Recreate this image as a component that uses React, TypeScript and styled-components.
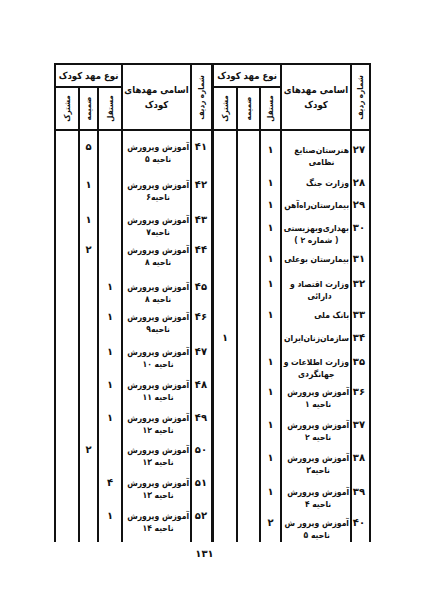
import React from "react";
import styled, { createGlobalStyle } from "styled-components";

type Row = {
  n: string;
  name: string[];
  top: number;
  mostaghel?: string;
  zamime?: string;
  moshtarak?: string;
};

const INK = "#111";
const BODY_START = 131;
const BODY_END = 542;

const rightRows: Row[] = [
  { n: "۲۷", name: ["هنرستان‌صنایع", "نظامی"], top: 150, mostaghel: "۱" },
  { n: "۲۸", name: ["وزارت جنگ"], top: 183, mostaghel: "۱" },
  { n: "۲۹", name: ["بیمارستان‌راه‌آهن"], top: 205, mostaghel: "۱" },
  { n: "۳۰", name: ["بهداری‌وبهزیستی", "( شماره ۲ )"], top: 228, mostaghel: "۱" },
  { n: "۳۱", name: ["بیمارستان بوعلی"], top: 259, mostaghel: "۱" },
  { n: "۳۲", name: ["وزارت اقتصاد و", "دارائی"], top: 284, mostaghel: "۱" },
  { n: "۳۳", name: ["بانک ملی"], top: 315, mostaghel: "۱" },
  { n: "۳۴", name: ["سازمان‌زنان‌ایران"], top: 338, moshtarak: "۱" },
  { n: "۳۵", name: ["وزارت اطلاعات و", "جهانگردی"], top: 362, mostaghel: "۱" },
  { n: "۳۶", name: ["آموزش وپرورش", "ناحیه ۱"], top: 392, mostaghel: "۱" },
  { n: "۳۷", name: ["آموزش وپرورش", "ناحیه ۲"], top: 425, mostaghel: "۱" },
  { n: "۳۸", name: ["آموزش وپرورش", "ناحیه۳"], top: 458, mostaghel: "۱" },
  { n: "۳۹", name: ["آموزش وپرورش", "ناحیه ۴"], top: 492, mostaghel: "۱" },
  { n: "۴۰", name: ["آموزش وپرور ش", "ناحیه ۵"], top: 523, mostaghel: "۲" },
];

const leftRows: Row[] = [
  { n: "۴۱", name: ["آموزش وپرورش", "ناحیه ۵"], top: 147, zamime: "۵" },
  { n: "۴۲", name: ["آموزش وپرورش", "ناحیه۶"], top: 185, zamime: "۱" },
  { n: "۴۳", name: ["آموزش وپرورش", "ناحیه۷"], top: 220, zamime: "۱" },
  { n: "۴۴", name: ["آموزش وپرورش", "ناحیه ۸"], top: 250, zamime: "۲" },
  { n: "۴۵", name: ["آموزش وپرورش", "ناحیه ۸"], top: 287, mostaghel: "۱" },
  { n: "۴۶", name: ["آموزش وپرورش", "ناحیه۹"], top: 317, mostaghel: "۱" },
  { n: "۴۷", name: ["آموزش وپرورش", "ناحیه ۱۰"], top: 352, mostaghel: "۱" },
  { n: "۴۸", name: ["آموزش وپرورش", "ناحیه ۱۱"], top: 385, mostaghel: "۱" },
  { n: "۴۹", name: ["آموزش وپرورش", "ناحیه ۱۲"], top: 418, mostaghel: "۱" },
  { n: "۵۰", name: ["آموزش وپرورش", "ناحیه ۱۳"], top: 450, zamime: "۲" },
  { n: "۵۱", name: ["آموزش وپرورش", "ناحیه ۱۳"], top: 483, mostaghel: "۴" },
  { n: "۵۲", name: ["آموزش وپرورش", "ناحیه ۱۴"], top: 516, mostaghel: "۱" },
];

const GlobalStyle = createGlobalStyle`
  html, body {
    margin: 0;
    padding: 0;
    background: #fff;
  }
  body {
    font-family: "DejaVu Sans Condensed", "DejaVu Sans", sans-serif;
    color: ${INK};
  }
`;

const Page = styled.div`
  width: 424px;
  height: 599px;
  box-sizing: border-box;
  padding: 63px 0 0 54px;
  background: #fff;
`;

const Table = styled.div`
  display: flex;
  width: 317px;
`;

const Half = styled.div<{ $cols: string; $rows: string; $left: number; $right: number }>`
  display: grid;
  direction: rtl;
  grid-template-columns: ${(p) => p.$cols};
  grid-template-rows: ${(p) => p.$rows};
  border-top: 2px solid ${INK};
  border-left: ${(p) => p.$left}px solid ${INK};
  border-right: ${(p) => p.$right}px solid ${INK};
`;

const HeadCell = styled.div<{ $edge?: boolean; $tall?: boolean }>`
  box-sizing: border-box;
  grid-row: ${(p) => (p.$tall ? "span 2" : "auto")};
  border-left: ${(p) => (p.$edge ? 0 : 2)}px solid ${INK};
  border-bottom: 2px solid ${INK};
  display: flex;
  align-items: center;
  justify-content: center;
  font-size: 9.5px;
  font-weight: bold;
  line-height: 15px;
  text-align: center;
  white-space: nowrap;
`;

const GroupCell = styled(HeadCell)`
  grid-column: span 3;
`;

const Vertical = styled.span`
  display: inline-block;
  transform: rotate(-90deg);
  white-space: nowrap;
  font-size: 8px;
`;

const Cell = styled.div<{ $edge?: boolean; $pad: number; $kind: "num" | "name" | "val" }>`
  box-sizing: border-box;
  border-left: ${(p) => (p.$edge ? 0 : 2)}px solid ${INK};
  padding-top: ${(p) => p.$pad}px;
  padding-right: ${(p) => (p.$kind === "num" ? 4 : p.$kind === "name" ? 1 : 0)}px;
  text-align: ${(p) => (p.$kind === "val" ? "center" : "right")};
  font-family: ${(p) => (p.$kind === "name" ? "inherit" : `"DejaVu Sans", sans-serif`)};
  font-size: ${(p) => (p.$kind === "name" ? 8.5 : 10)}px;
  font-weight: bold;
  line-height: 12px;
  white-space: nowrap;
`;

const NameBlock = styled.span`
  display: inline-block;
  text-align: center;
  letter-spacing: -0.2px;

  span {
    display: block;
  }
  span:first-child {
    text-align: right;
  }
`;

const Footer = styled.div`
  width: 317px;
  box-sizing: border-box;
  padding: 5px 16px 0 0;
  text-align: center;
  font-family: "DejaVu Sans", sans-serif;
  font-size: 10px;
  font-weight: bold;
  line-height: 14px;
`;

function layout(rows: Row[]) {
  const starts = rows.map((r, i) => (i === 0 ? BODY_START : r.top - 12));
  const heights = starts.map((s, i) => (i < starts.length - 1 ? starts[i + 1] - s : BODY_END - s));
  const pads = rows.map((r, i) => r.top - 6 - starts[i]);
  return { heights, pads };
}

const TableHalf = ({ rows, cols, left, right }: { rows: Row[]; cols: string; left: number; right: number }) => {
  const { heights, pads } = layout(rows);
  const template = `23px 43px ${heights.map((h) => `${h}px`).join(" ")}`;

  return (
    <Half $cols={cols} $rows={template} $left={left} $right={right}>
      <HeadCell $tall>
        <Vertical>شماره ردیف</Vertical>
      </HeadCell>
      <HeadCell $tall>
        اسامی مهدهای
        <br />
        کودک
      </HeadCell>
      <GroupCell $edge>نوع مهد کودک</GroupCell>
      <HeadCell>
        <Vertical>مستقل</Vertical>
      </HeadCell>
      <HeadCell>
        <Vertical>ضمیمه</Vertical>
      </HeadCell>
      <HeadCell $edge>
        <Vertical>مشترک</Vertical>
      </HeadCell>

      {rows.map((r, i) => (
        <React.Fragment key={r.n}>
          <Cell $kind="num" $pad={pads[i]}>
            {r.n}
          </Cell>
          <Cell $kind="name" $pad={pads[i]}>
            <NameBlock>
              {r.name.map((line) => (
                <span key={line}>{line}</span>
              ))}
            </NameBlock>
          </Cell>
          <Cell $kind="val" $pad={pads[i]}>
            {r.mostaghel}
          </Cell>
          <Cell $kind="val" $pad={pads[i]}>
            {r.zamime}
          </Cell>
          <Cell $kind="val" $pad={pads[i]} $edge>
            {r.moshtarak}
          </Cell>
        </React.Fragment>
      ))}
    </Half>
  );
};

export default function App() {
  return (
    <>
      <GlobalStyle />
      <Page>
        <Table>
          <TableHalf rows={leftRows} cols="21px 69px 24px 19px 22px" left={2} right={0} />
          <TableHalf rows={rightRows} cols="19px 70px 21px 23px 22px" left={3} right={2} />
        </Table>
        <Footer>۱۳۱</Footer>
      </Page>
    </>
  );
}
